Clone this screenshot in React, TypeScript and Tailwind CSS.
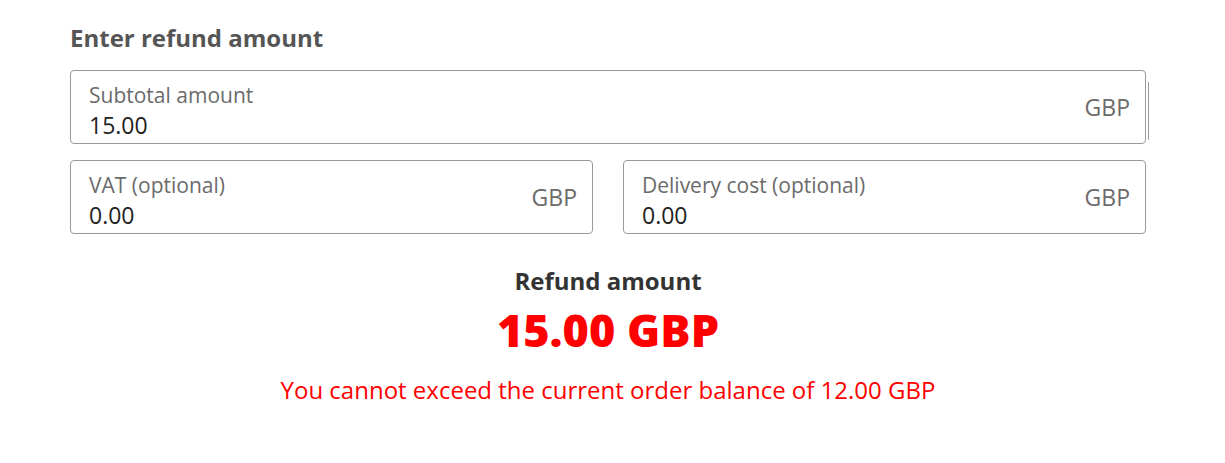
import { useState } from "react";

const Field = ({
  label,
  value,
  onChange,
  extraEdge,
}: {
  label: string;
  value: string;
  onChange: (v: string) => void;
  extraEdge?: boolean;
}) => (
  <div className="relative flex-1">
    <label className="flex h-[74px] items-center rounded-[4px] border border-[#9a9a9a] bg-white pl-[18px] pr-[15px]">
      <div className="flex h-full min-w-0 flex-1 flex-col pt-[10px]">
        <span className="text-[21px] leading-[28px] text-[#6b6b6b]">{label}</span>
        <input
          value={value}
          onChange={(e) => onChange(e.target.value)}
          className="w-full bg-transparent p-0 text-[23px] leading-[32px] text-[#222] outline-none"
        />
      </div>
      <span className="text-[23px] text-[#6b6b6b]">GBP</span>
    </label>
    {extraEdge && (
      <div className="absolute right-[-3px] top-[12px] h-[58px] w-px bg-[#9a9a9a]" />
    )}
  </div>
);

export default function App() {
  const [subtotal, setSubtotal] = useState("15.00");
  const [vat, setVat] = useState("0.00");
  const [delivery, setDelivery] = useState("0.00");

  return (
    <div className="min-h-screen bg-white font-['Open_Sans',sans-serif]">
      <div className="mx-[70px] w-[1076px] pt-[22px]">
        <h2 className="mb-[16px] text-[24px] font-bold leading-[32px] text-[#555]">
          Enter refund amount
        </h2>

        <div className="flex flex-col gap-[16px]">
          <Field label="Subtotal amount" value={subtotal} onChange={setSubtotal} extraEdge />
          <div className="flex gap-[30px]">
            <Field label="VAT (optional)" value={vat} onChange={setVat} />
            <Field label="Delivery cost (optional)" value={delivery} onChange={setDelivery} />
          </div>
        </div>

        <div className="mt-[31px] flex flex-col items-center text-center">
          <p className="text-[24px] font-bold leading-[32px] text-[#333]">Refund amount</p>
          <p className="mt-[5px] text-[45px] font-extrabold leading-[56px] text-[#ff0000]">
            15.00 GBP
          </p>
          <p className="mt-[16px] text-[24px] leading-[32px] text-[#ff0000]">
            You cannot exceed the current order balance of 12.00 GBP
          </p>
        </div>
      </div>
    </div>
  );
}
